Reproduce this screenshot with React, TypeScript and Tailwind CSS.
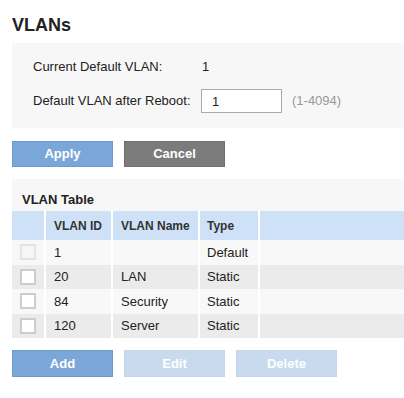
import React from 'react';

const rows = [
  { id: '1', name: '', type: 'Default', disabled: true },
  { id: '20', name: 'LAN', type: 'Static' },
  { id: '84', name: 'Security', type: 'Static' },
  { id: '120', name: 'Server', type: 'Static' },
];

const cols = 'grid grid-cols-[32px_65px_85px_58px_1fr] gap-x-[2px]';

export default function App() {
  return (
    <div className="min-h-[398px] bg-white pl-3 text-[13px] text-[#222] font-['Liberation_Sans',Arial,sans-serif]">
      <h1 className="pt-[14px] text-[18px] font-bold leading-[22px] text-[#222]">VLANs</h1>

      {/* Default VLAN */}
      <div className="mt-[7px] h-[85px] bg-[#f7f7f7] pl-[21px] pt-[16px]">
        <div className="flex h-[16px] items-center">
          <span className="w-[169px]">Current Default VLAN:</span>
          <span>1</span>
        </div>
        <div className="mt-[14px] flex items-center">
          <span className="w-[168px]">Default VLAN after Reboot:</span>
          <input
            type="text"
            defaultValue="1"
            className="h-[24px] w-[81px] border border-[#aaa] bg-white px-[10px] text-[13px] outline-none"
          />
          <span className="ml-[10px] text-[#999]">(1-4094)</span>
        </div>
      </div>

      <div className="mt-[13px] flex gap-[11px]">
        <button className="h-[26px] w-[101px] border border-[#6d9bd0] bg-[#7aa6d8] text-[13px] font-bold text-white">Apply</button>
        <button className="h-[26px] w-[101px] border border-[#6e6e6e] bg-[#7b7b7b] text-[13px] font-bold text-white">Cancel</button>
      </div>

      {/* VLAN Table */}
      <div className="mt-[12px] bg-[#f7f7f7] pt-[11px]">
        <div className="pl-[10px] text-[13px] font-bold leading-[20px]">VLAN Table</div>
        <div className={`${cols} mt-[1px] h-[29px] items-center bg-white text-[12px]`}>
          <div className="h-full bg-[#cfe1f6]" />
          <div className="flex h-full items-center bg-[#cfe1f6] pl-[8px] font-bold text-[#333]">VLAN ID</div>
          <div className="flex h-full items-center bg-[#cfe1f6] pl-[8px] font-bold text-[#333]">VLAN Name</div>
          <div className="flex h-full items-center bg-[#cfe1f6] pl-[7px] font-bold text-[#333]">Type</div>
          <div className="h-full bg-[#cfe1f6]" />
        </div>
        {rows.map((r, i) => (
          <div key={r.id} className={`${cols} h-[24.5px] bg-white`}>
            {[0, 1, 2, 3, 4].map((c) => (
              <div
                key={c}
                className={`flex h-full items-center ${i % 2 === 0 ? 'bg-[#f8f8f8]' : 'bg-[#ebebeb]'} ${c === 0 ? 'justify-center' : c === 3 ? 'pl-[7px]' : 'pl-[8px]'}`}
              >
                {c === 0 && (
                  <span
                    className={`block h-[16px] w-[16px] border-2 ${r.disabled ? 'border-[#e4e4e4] bg-[#f6f6f6]' : 'border-[#cdcdcd] bg-white'}`}
                  />
                )}
                {c === 1 && r.id}
                {c === 2 && r.name}
                {c === 3 && r.type}
              </div>
            ))}
          </div>
        ))}
      </div>

      <div className="mt-[12px] flex gap-[11px]">
        <button className="h-[27px] w-[101px] border border-[#6d9bd0] bg-[#7aa6d8] text-[13px] font-bold text-white">Add</button>
        <button className="h-[27px] w-[101px] border border-[#c2d6ee] bg-[#c9daee] text-[13px] font-bold text-white">Edit</button>
        <button className="h-[27px] w-[101px] border border-[#c2d6ee] bg-[#c9daee] text-[13px] font-bold text-white">Delete</button>
      </div>
    </div>
  );
}
